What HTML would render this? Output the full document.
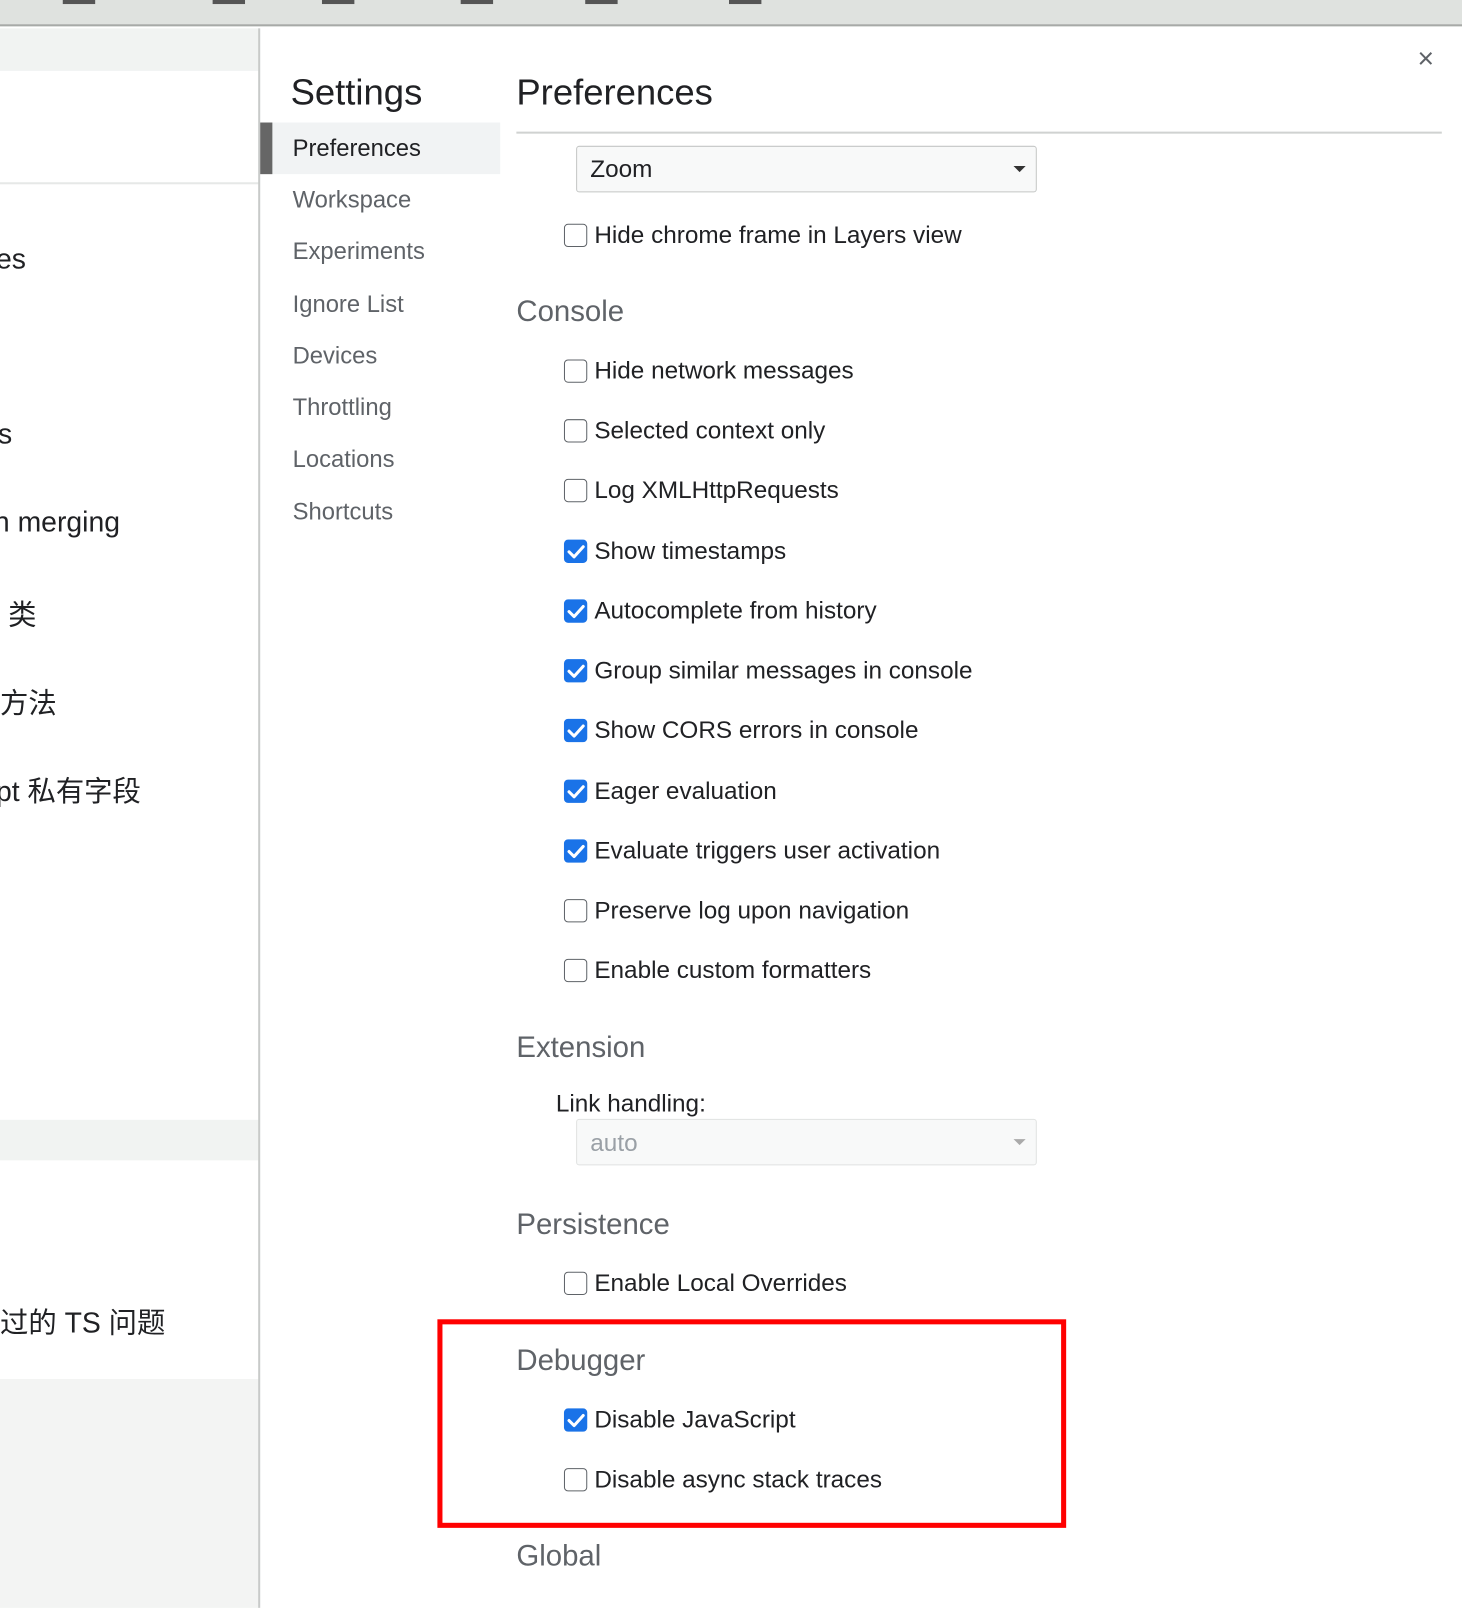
<!DOCTYPE html>
<html><head><meta charset="utf-8"><style>
*{margin:0;padding:0;box-sizing:border-box}
body{width:1462px;height:1588px;position:relative;overflow:hidden;background:#fff;font-family:"Liberation Sans","Noto Sans CJK SC",sans-serif;color:#202124}
#w{position:absolute;left:0;top:0;width:1444px;height:1569px;transform:scale(1.0125);transform-origin:0 0}
.a{position:absolute;white-space:nowrap}
.cb{position:absolute;left:557px;width:23px;height:23px;border:1.5px solid #5f6368;border-radius:4px;background:#fff}
.cb.on{background:#1a73e8;border-color:#1a73e8}
.lbl{position:absolute;left:587px;font-size:24px;line-height:26px}
.h{position:absolute;left:510px;font-size:29px;color:#5f6368}
.nav{position:absolute;left:289px;font-size:23.5px;color:#5f6368}
.lt{position:absolute;font-size:28px;color:#202124}
</style></head><body><div id="w">
<div class="a" style="left:0;top:0;width:1462px;height:26px;background:#dfe2df;border-bottom:2px solid #a7aaa7"></div>
<div class="a" style="left:62px;top:0;width:32px;height:4px;background:#555"></div>
<div class="a" style="left:210px;top:0;width:32px;height:4px;background:#555"></div>
<div class="a" style="left:318px;top:0;width:32px;height:4px;background:#555"></div>
<div class="a" style="left:455px;top:0;width:32px;height:4px;background:#555"></div>
<div class="a" style="left:578px;top:0;width:32px;height:4px;background:#555"></div>
<div class="a" style="left:720px;top:0;width:32px;height:4px;background:#555"></div>
<div class="a" style="left:0;top:28px;width:256px;height:42px;background:#f1f3f2"></div>
<div class="a" style="left:0;top:180px;width:256px;height:2px;background:#e6e8e7"></div>
<div class="a" style="left:0;top:1106px;width:256px;height:40px;background:#f1f3f2"></div>
<div class="a" style="left:0;top:1362px;width:256px;height:226px;background:#f3f4f3"></div>
<div class="a" style="left:255px;top:28px;width:2px;height:1560px;background:#c8cac9"></div>
<div class="lt" style="left:-4px;top:240px">es</div>
<div class="lt" style="left:-2px;top:413px">s</div>
<div class="lt" style="left:-6px;top:500px">n merging</div>
<div class="lt" style="left:8px;top:586px">类</div>
<div class="lt" style="left:0;top:673px">方法</div>
<div class="lt" style="left:-4px;top:760px">pt 私有字段</div>
<div class="lt" style="left:0;top:1285px">过的 TS 问题</div>

<div class="a" style="left:287px;top:70px;font-size:36px">Settings</div>
<div class="a" style="left:257px;top:121px;width:237px;height:51px;background:#f1f3f4"></div>
<div class="a" style="left:257px;top:121px;width:12px;height:51px;background:#666"></div>
<div class="nav" style="top:133px;color:#202124">Preferences</div>
<div class="nav" style="top:184px">Workspace</div>
<div class="nav" style="top:235px">Experiments</div>
<div class="nav" style="top:287px">Ignore List</div>
<div class="nav" style="top:338px">Devices</div>
<div class="nav" style="top:389px">Throttling</div>
<div class="nav" style="top:440px">Locations</div>
<div class="nav" style="top:492px">Shortcuts</div>

<div class="a" style="left:510px;top:70px;font-size:36px">Preferences</div>
<div class="a" style="left:1400px;top:42px;font-size:28px;color:#5f6368">×</div>
<div class="a" style="left:510px;top:130px;width:914px;height:2px;background:#d0d2d1"></div>
<div class="a" style="left:569px;top:144px;width:455px;height:46px;border:1.5px solid #c4c6c5;border-radius:3px;background:#f8f9f9"></div>
<div class="a" style="left:583px;top:154px;font-size:24px">Zoom</div>
<div class="a" style="left:1001px;top:164px;width:0;height:0;border-left:6px solid transparent;border-right:6px solid transparent;border-top:6px solid #333"></div>

<div class="cb" style="top:221px"></div><div class="lbl" style="top:220px">Hide chrome frame in Layers view</div>
<div class="h" style="top:292px">Console</div>
<div class="cb" style="top:355px"></div><div class="lbl" style="top:354px">Hide network messages</div>
<div class="cb" style="top:414px"></div><div class="lbl" style="top:413px">Selected context only</div>
<div class="cb" style="top:473px"></div><div class="lbl" style="top:472px">Log XMLHttpRequests</div>
<div class="cb on" style="top:533px"></div><div class="lbl" style="top:532px">Show timestamps</div>
<div class="cb on" style="top:592px"></div><div class="lbl" style="top:591px">Autocomplete from history</div>
<div class="cb on" style="top:651px"></div><div class="lbl" style="top:650px">Group similar messages in console</div>
<div class="cb on" style="top:710px"></div><div class="lbl" style="top:709px">Show CORS errors in console</div>
<div class="cb on" style="top:770px"></div><div class="lbl" style="top:769px">Eager evaluation</div>
<div class="cb on" style="top:829px"></div><div class="lbl" style="top:828px">Evaluate triggers user activation</div>
<div class="cb" style="top:888px"></div><div class="lbl" style="top:887px">Preserve log upon navigation</div>
<div class="cb" style="top:947px"></div><div class="lbl" style="top:946px">Enable custom formatters</div>
<div class="h" style="top:1019px">Extension</div>
<div class="a" style="left:549px;top:1077px;font-size:24px">Link handling:</div>
<div class="a" style="left:569px;top:1105px;width:455px;height:46px;border:1.5px solid #e0e2e1;border-radius:3px;background:#f8f9f9"></div>
<div class="a" style="left:583px;top:1116px;font-size:24px;color:#9aa0a6">auto</div>
<div class="a" style="left:1001px;top:1125px;width:0;height:0;border-left:6px solid transparent;border-right:6px solid transparent;border-top:6px solid #aaa"></div>
<div class="h" style="top:1194px">Persistence</div>
<div class="cb" style="top:1256px"></div><div class="lbl" style="top:1255px">Enable Local Overrides</div>
<div class="h" style="top:1328px">Debugger</div>
<div class="cb on" style="top:1391px"></div><div class="lbl" style="top:1390px">Disable JavaScript</div>
<div class="cb" style="top:1450px"></div><div class="lbl" style="top:1449px">Disable async stack traces</div>
<div class="h" style="top:1521px">Global</div>
<div class="a" style="left:432px;top:1303px;width:621px;height:206px;border:5px solid #f00"></div>
<svg class="a" style="left:0;top:0" width="1462" height="1588">
<g fill="none" stroke="#fff" stroke-width="3" stroke-linecap="round" stroke-linejoin="round">
<path d="M562 545l5 5 9-10"/><path d="M562 604l5 5 9-10"/><path d="M562 663l5 5 9-10"/><path d="M562 722l5 5 9-10"/><path d="M562 782l5 5 9-10"/><path d="M562 841l5 5 9-10"/><path d="M562 1403l5 5 9-10"/>
</g></svg>
</div></body></html>
